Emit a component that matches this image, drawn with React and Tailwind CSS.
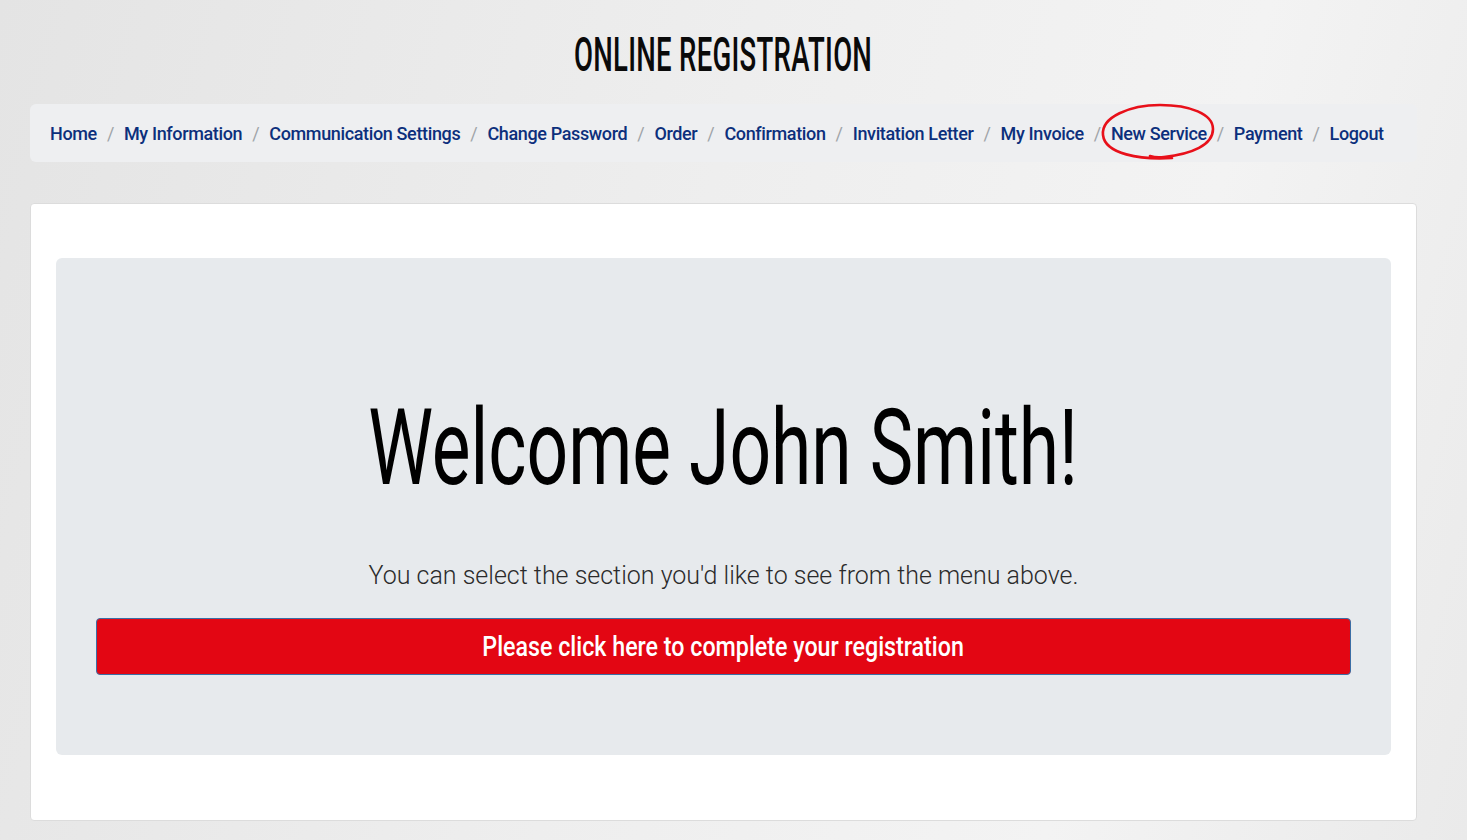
import React from 'react';

const links = [
    'Home',
    'My Information',
    'Communication Settings',
    'Change Password',
    'Order',
    'Confirmation',
    'Invitation Letter',
    'My Invoice',
    'New Service',
    'Payment',
    'Logout',
];

// hand-drawn loop used to mark the highlighted menu entry
function Scribble() {
    return (
        <svg
            className="absolute left-[-11px] top-[-18px] w-[116px] h-[60px] pointer-events-none"
            viewBox="0 0 116 60"
            fill="none"
        >
            <path
                d="M72 56 C40 58 5 52 3 33 C1 15 30 3 60 3 C90 3 113 12 113 27 C113 43 92 52 64 55 C57 56 53 55 50 54"
                stroke="#e8101a"
                strokeWidth="2.6"
                strokeLinecap="round"
            />
        </svg>
    );
}

export default function App() {
    return (
        <div
            className="min-h-screen bg-[linear-gradient(105deg,#e4e4e4_0%,#eeeeee_45%,#f3f3f3_75%,#eaeaea_100%)] pl-[30px] pr-[50px] pt-[30px] pb-[20px]"
            style={{ fontFamily: "Roboto, 'Liberation Sans', sans-serif" }}
        >
            {/* Page title */}
            <div className="h-[74px] flex items-start justify-center overflow-visible">
                <h1 className="inline-block scale-x-[0.573] origin-center text-[48px] leading-[50px] font-medium uppercase text-[#0a0a0a] tracking-[0.5px]">
                    Online Registration
                </h1>
            </div>

            {/* Breadcrumb menu */}
            <nav className="h-[58px] bg-[#eeeff1] rounded-[6px] px-[20px] flex items-center whitespace-nowrap text-[18px] font-medium tracking-[-0.36px]">
                {links.map((label, i) => (
                    <React.Fragment key={label}>
                        {i > 0 && <span className="px-[10px] text-[#a0a4a8] font-normal">/</span>}
                        {label === 'New Service' ? (
                            <span className="relative shrink-0">
                                <a href="#" className="text-[#0c2f7c]">{label}</a>
                                <Scribble />
                            </span>
                        ) : (
                            <a href="#" className="shrink-0 text-[#0c2f7c]">{label}</a>
                        )}
                    </React.Fragment>
                ))}
            </nav>

            {/* Main card */}
            <div className="mt-[41px] bg-white border border-[#dcdcdc] rounded-[4px] h-[618px] px-[25px] pt-[54px]">
                <div className="bg-[#e7eaed] rounded-[6px] h-[497px] px-[40px] pt-[130px] flex flex-col items-center">
                    <h2 className="inline-block scale-x-[0.689] origin-center text-[106px] leading-[120px] font-normal text-black whitespace-nowrap">
                        Welcome John Smith!
                    </h2>
                    <p className="mt-[53px] text-[25px] leading-[30px] text-[#2b2b2b] font-light">
                        You can select the section you'd like to see from the menu above.
                    </p>
                    <button className="mt-[27px] w-full h-[57px] bg-[#e30613] border border-[#3b6ea5] rounded-[4px] flex items-center justify-center">
                        <span className="inline-block scale-x-[0.83] text-white text-[28px] font-medium whitespace-nowrap">
                            Please click here to complete your registration
                        </span>
                    </button>
                </div>
            </div>
        </div>
    );
}
